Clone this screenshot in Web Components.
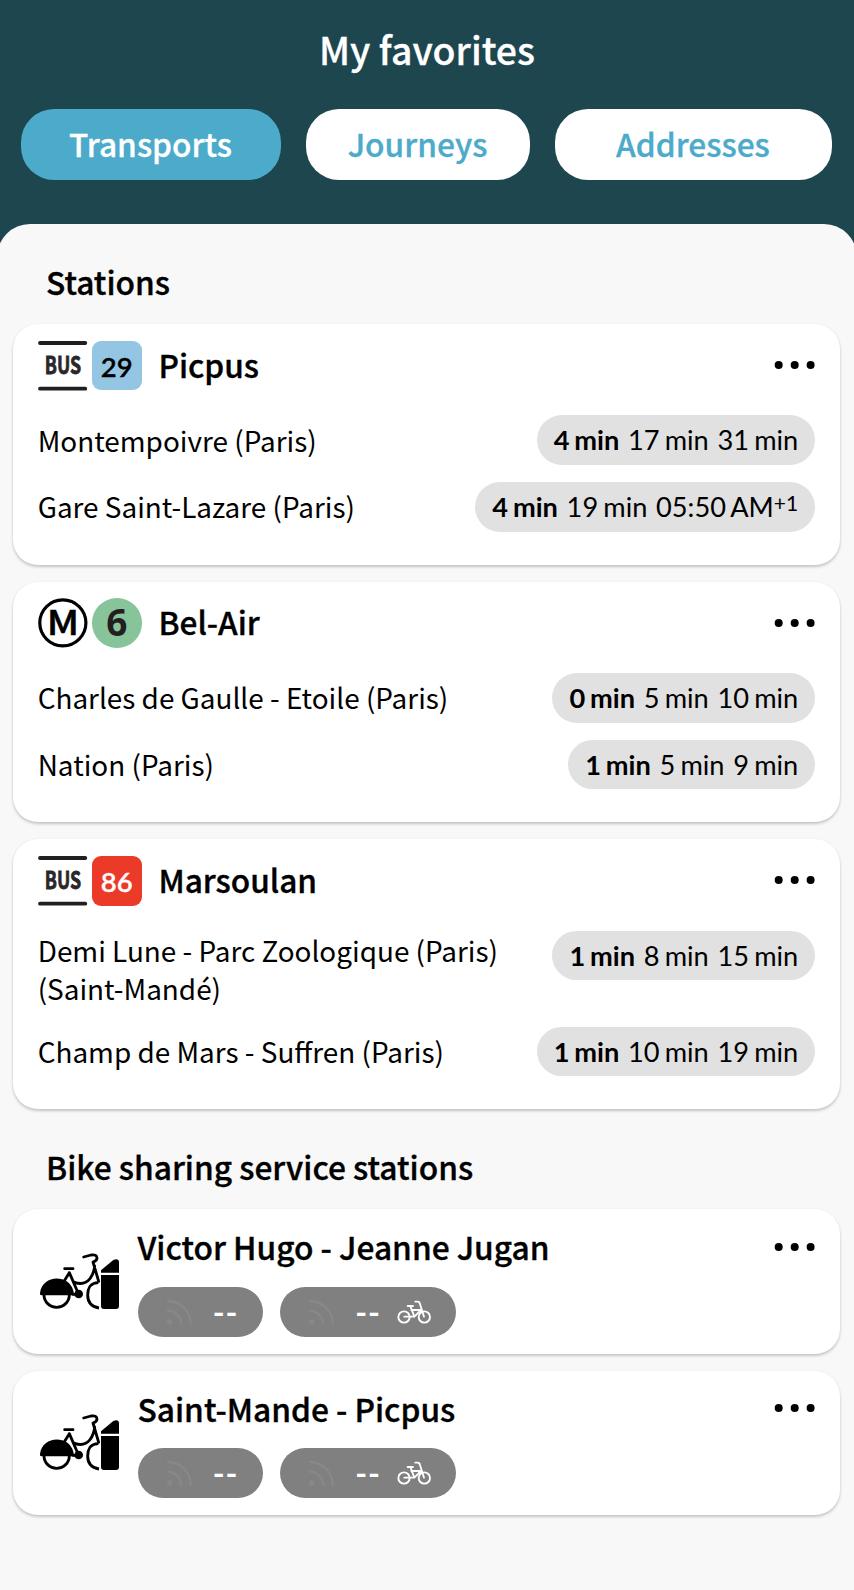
<!DOCTYPE html>
<html lang="en">
<head>
<meta charset="utf-8">
<title>My favorites</title>
<style>
  html { background: #f8f8f8; }
  body { margin: 0; width: 854px; height: 1590px; overflow: hidden; color: #000; font-family: "Noto Sans CJK SC", "Noto Sans", sans-serif; }
</style>
</head>
<body>
<favorites-page>
  <span slot="title">My favorites</span>
  <fav-tab slot="tabs" active style="width:260px">Transports</fav-tab>
  <fav-tab slot="tabs" style="width:224.5px">Journeys</fav-tab>
  <fav-tab slot="tabs" style="width:276.7px">Addresses</fav-tab>

  <fav-section>
    <span slot="heading">Stations</span>
    <station-card>
      <mode-logo slot="mode" kind="bus"></mode-logo>
      <line-badge slot="mode" style="--bg:#94c6e3">29</line-badge>
      <span slot="name">Picpus</span>
      <departure-row times="4 min|17 min|31 min">Montempoivre (Paris)</departure-row>
      <departure-row times="4 min|19 min|05:50 AM" extra="+1">Gare Saint-Lazare (Paris)</departure-row>
    </station-card>
    <station-card>
      <mode-logo slot="mode" kind="metro"></mode-logo>
      <line-badge slot="mode" round style="--bg:#87c499">6</line-badge>
      <span slot="name">Bel-Air</span>
      <departure-row times="0 min|5 min|10 min">Charles de Gaulle - Etoile (Paris)</departure-row>
      <departure-row times="1 min|5 min|9 min">Nation (Paris)</departure-row>
    </station-card>
    <station-card>
      <mode-logo slot="mode" kind="bus"></mode-logo>
      <line-badge slot="mode" style="--bg:#eb3a27;color:#fff">86</line-badge>
      <span slot="name">Marsoulan</span>
      <departure-row times="1 min|8 min|15 min" style="min-height:79px">Demi Lune - Parc Zoologique (Paris) (Saint-Mandé)</departure-row>
      <departure-row times="1 min|10 min|19 min">Champ de Mars - Suffren (Paris)</departure-row>
    </station-card>
  </fav-section>

  <fav-section>
    <span slot="heading">Bike sharing service stations</span>
    <bike-card>Victor Hugo - Jeanne Jugan</bike-card>
    <bike-card>Saint-Mande - Picpus</bike-card>
  </fav-section>
</favorites-page>

<script>
const define = (name, html, setup) => customElements.define(name, class extends HTMLElement {
  constructor() {
    super();
    const t = document.createElement('template');
    t.innerHTML = html;
    this.attachShadow({ mode: 'open' }).append(t.content.cloneNode(true));
  }
  connectedCallback() { if (setup) setup(this, this.shadowRoot); }
});

define('favorites-page', `
  <style>
    :host { display: block; min-height: 1590px; background: #1d464f; }
    h1 { margin: 0; text-align: center; color: #fff; font-size: 37.4px; font-weight: 500; line-height: 99.3px; -webkit-text-stroke: .3px; }
    nav { display: flex; gap: 24.8px; padding: 10px 21px 43.7px; }
    main { margin: 0 -3px; padding: 0 17px 0 16px; min-height: 1366px; background: #f8f8f8; border-radius: 33px 33px 0 0; }
  </style>
  <h1><slot name="title"></slot></h1>
  <nav><slot name="tabs"></slot></nav>
  <main><slot></slot></main>`);

define('fav-tab', `
  <style>
    :host { display: block; box-sizing: border-box; flex: none; height: 71px; border-radius: 33px; background: #fff; color: #4caaca;
      text-align: center; font-size: 31.7px; font-weight: 500; line-height: 69px; text-indent: -1px; -webkit-text-stroke: .3px; }
    :host([active]) { background: #4caaca; color: #fff; }
  </style><slot></slot>`);

define('fav-section', `
  <style>
    :host { display: block; }
    h2 { margin: 0; padding: 14.7px 0 1.3px 33px; font-size: 31.7px; font-weight: 500; line-height: 84px; -webkit-text-stroke: .35px; }
    div { display: flex; flex-direction: column; gap: 16.8px; }
  </style>
  <h2><slot name="heading"></slot></h2>
  <div><slot></slot></div>`);

const card = `display: block; box-sizing: border-box; background: #fff; border-radius: 25px; box-shadow: 0 2px 3px rgba(0,0,0,.2), 0 0 3px rgba(0,0,0,.04);`;

define('more-dots', `
  <style>:host { display: block; } svg { display: block; }</style>
  <svg width="42" height="10" viewBox="0 0 42 10"><circle cx="5.7" cy="5" r="4"/><circle cx="21.7" cy="5" r="4"/><circle cx="37.6" cy="5" r="4"/></svg>`);

define('station-card', `
  <style>
    :host { ${card} padding: 16.6px 24.7px 33px; }
    header { display: flex; gap: 4.6px; height: 49.7px; margin-bottom: 25.2px; }
    h3 { flex: 1; margin: 0 0 0 12.2px; font-size: 31.6px; font-weight: 500; line-height: 46px; -webkit-text-stroke: .35px; }
    more-dots { margin-top: 19.6px; }
    section { display: flex; flex-direction: column; gap: 17px; }
  </style>
  <header><slot name="mode"></slot><h3><slot name="name"></slot></h3><more-dots></more-dots></header>
  <section><slot></slot></section>`);

const logos = {
  bus: `<g stroke="#231f20" stroke-width="3.8" stroke-linecap="round"><path d="M2 2H47.6M2 48H47.6"/></g>
    <text x="6.8" y="33.2" textLength="36.6" lengthAdjust="spacingAndGlyphs" font-size="23.6" font-weight="700" fill="#2b2728" stroke="#2b2728" stroke-width=".8" font-family="Noto Sans CJK SC">BUS</text>`,
  metro: `<circle cx="25" cy="25" r="23.2" fill="#fff" stroke="#000" stroke-width="3.2"/>
    <text x="8.8" y="37.3" textLength="32.6" lengthAdjust="spacingAndGlyphs" font-size="34.5" font-weight="500" stroke="#000" stroke-width=".5" stroke-linejoin="round" font-family="Noto Sans CJK SC">M</text>`
};
define('mode-logo', `
  <style>:host { display: block; width: 49.7px; height: 49.7px; } svg { display: block; width: 100%; height: 100%; overflow: visible; }</style>
  <div></div>`, (el, root) => { root.querySelector('div').innerHTML = `<svg viewBox="0 0 50 50">${logos[el.getAttribute('kind')]}</svg>`; });

define('line-badge', `
  <style>
    :host { display: block; width: 49.7px; height: 49.7px; border-radius: 9px; background: var(--bg); text-align: center;
      font: 600 27.5px/51.4px Lato, sans-serif; -webkit-text-stroke: .3px; }
    :host([round]) { border-radius: 50%; color: #231f20; font: 700 37px/48.6px "Noto Sans", sans-serif; -webkit-text-stroke: 0; }
  </style><slot></slot>`);

define('departure-row', `
  <style>
    :host { display: flex; justify-content: space-between; align-items: flex-start; }
    .dest { flex: 1; font-size: 27.9px; line-height: 38.3px; align-self: stretch; display: flex; align-items: center; min-height: 48.8px; max-height: 48.8px; }
    :host([style]) .dest { align-items: flex-start; max-height: none; }
    .times { display: flex; gap: 8.7px; box-sizing: border-box; height: 49.7px; padding: 0 17.1px; border-radius: 25px; background: #e1e1e1;
      font: 400 27.2px/49.9px Lato, sans-serif; word-spacing: -1.8px; white-space: nowrap; }
    b { font-weight: 700; }
    sup { font-size: 21px; line-height: 0; vertical-align: 6.3px; }
  </style>
  <div class="dest"><slot></slot></div><div class="times"></div>`, (el, root) => {
  const [first, ...rest] = el.getAttribute('times').split('|');
  const extra = el.getAttribute('extra');
  root.querySelector('.times').innerHTML = `<b>${first}</b>` +
    rest.map((t, i) => `<span>${t}${extra && i === rest.length - 1 ? `<sup>${extra}</sup>` : ''}</span>`).join('');
});

define('signal-icon', `
  <style>:host { display: block; } svg { display: block; }</style>
  <svg width="26" height="26" viewBox="114 58 78 78" fill="none" stroke="#888" stroke-width="7" stroke-linecap="round"><circle cx="125" cy="127" r="8" fill="#888" stroke="none"/><path d="M120 93A40 40 0 0 1 159 132M120 64A69 69 0 0 1 188 132"/></svg>`);

define('small-bike', `
  <style>:host { display: block; } svg { display: block; }</style>
  <svg width="34" height="24" viewBox="381 61 102 72" fill="none" stroke="#fff" stroke-width="5.5" stroke-linecap="round" stroke-linejoin="round"><circle cx="402" cy="112" r="17"/><circle cx="463" cy="112" r="17"/><path d="M413 79H429M421 79L433 111H403M424 91H453L433 111M436 66H443Q449 66 450 73L462 111"/></svg>`);

define('bike-count', `
  <style>
    :host { display: flex; align-items: center; box-sizing: border-box; width: 125.6px; height: 49.8px; padding-left: 28px; border-radius: 25px; background: #808080; color: #fff; }
    span { margin-left: 21.3px; font: 700 32px/48px Lato, sans-serif; letter-spacing: .8px; width: 39px; }
    small-bike { display: none; }
    :host([electric]) { width: 175.8px; }
    :host([electric]) small-bike { display: block; margin-left: 2.5px; }
  </style>
  <signal-icon></signal-icon><span>--</span><small-bike></small-bike>`);

define('bike-card', `
  <style>
    :host { ${card} display: flex; height: 144.5px; padding: 14px 24.7px 0 25px; }
    svg { flex: none; width: 82px; height: 58px; margin-top: 28.5px; }
    .info { flex: 1; margin-left: 17.5px; }
    h3 { margin: 0 0 17.8px; font-size: 31.7px; font-weight: 500; line-height: 46px; -webkit-text-stroke: .35px; }
    .counts { display: flex; gap: 16.9px; }
    more-dots { margin-top: 18.6px; }
  </style>
  <svg viewBox="24 36 246 174" fill="none" stroke="#000" stroke-width="8.5" stroke-linecap="round" stroke-linejoin="round">
    <circle cx="80" cy="164" r="38" fill="#fff"/>
    <path d="M30 160C36 102 118 102 130 152L133 166H34Q29 166 30 160Z" fill="#000" stroke="none"/>
    <path d="M104 86H129M118 98L103 122M118 98L143 156M128 163H145"/>
    <circle cx="146" cy="162" r="13" fill="#000" stroke="none"/>
    <path d="M134 127Q162 138 180 116Q192 100 194 78M161 51L183 45Q200 42 201 54Q201 62 189 66L206 124"/>
    <path d="M205 128C180 128 173 147 173 165C173 184 183 200 207 204" stroke-linecap="butt"/>
    <path d="M213 98V91L250 60Q266 54 267 66V98ZM213 105H267V198Q267 207 258 207H222Q213 207 213 198Z" fill="#000" stroke="none"/>
  </svg>
  <div class="info"><h3><slot></slot></h3><div class="counts"><bike-count></bike-count><bike-count electric></bike-count></div></div>
  <more-dots></more-dots>`);
</script>
</body>
</html>
